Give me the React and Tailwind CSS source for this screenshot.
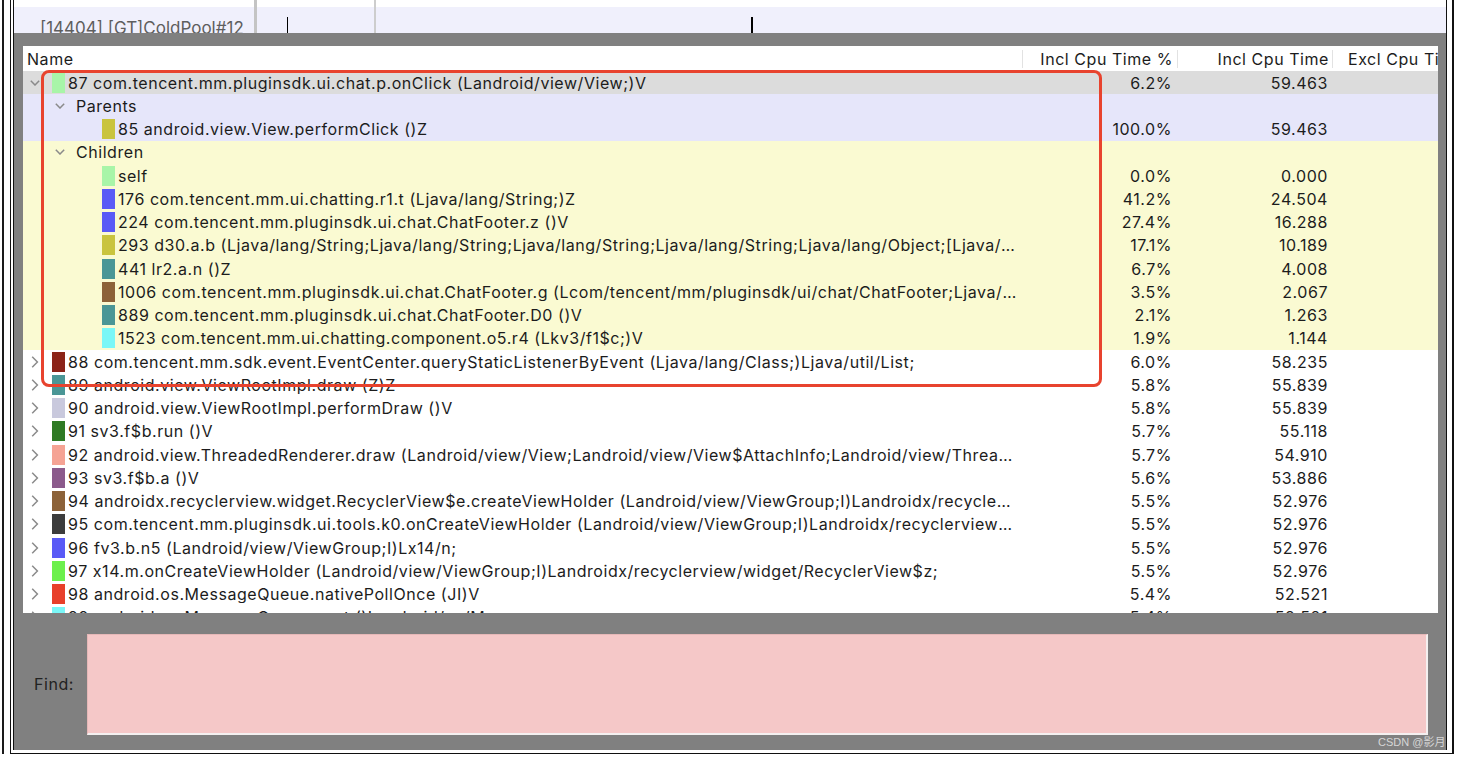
const LAV = "bg-[#e6e6fa]";
const YEL = "bg-[#fafad2]";

const rows = [
  { k: "top", open: true, c: "#a8f5a8", bg: "bg-[#dcdcdc]", t: "87 com.tencent.mm.pluginsdk.ui.chat.p.onClick (Landroid/view/View;)V", p: "6.2%", v: "59.463" },
  { k: "group", bg: LAV, t: "Parents" },
  { k: "child", c: "#c9c43e", bg: LAV, t: "85 android.view.View.performClick ()Z", p: "100.0%", v: "59.463" },
  { k: "group", bg: YEL, t: "Children" },
  { k: "child", c: "#a8f5a8", bg: YEL, t: "self", p: "0.0%", v: "0.000" },
  { k: "child", c: "#5a5af6", bg: YEL, t: "176 com.tencent.mm.ui.chatting.r1.t (Ljava/lang/String;)Z", p: "41.2%", v: "24.504" },
  { k: "child", c: "#5a5af6", bg: YEL, t: "224 com.tencent.mm.pluginsdk.ui.chat.ChatFooter.z ()V", p: "27.4%", v: "16.288" },
  { k: "child", c: "#c9c43e", bg: YEL, t: "293 d30.a.b (Ljava/lang/String;Ljava/lang/String;Ljava/lang/String;Ljava/lang/String;Ljava/lang/Object;[Ljava/lang/Object;)V", p: "17.1%", v: "10.189" },
  { k: "child", c: "#4a9696", bg: YEL, t: "441 lr2.a.n ()Z", p: "6.7%", v: "4.008" },
  { k: "child", c: "#8c6239", bg: YEL, t: "1006 com.tencent.mm.pluginsdk.ui.chat.ChatFooter.g (Lcom/tencent/mm/pluginsdk/ui/chat/ChatFooter;Ljava/lang/String;)V", p: "3.5%", v: "2.067" },
  { k: "child", c: "#4a9696", bg: YEL, t: "889 com.tencent.mm.pluginsdk.ui.chat.ChatFooter.D0 ()V", p: "2.1%", v: "1.263" },
  { k: "child", c: "#7af7f7", bg: YEL, t: "1523 com.tencent.mm.ui.chatting.component.o5.r4 (Lkv3/f1$c;)V", p: "1.9%", v: "1.144" },
  { k: "top", c: "#8b2318", t: "88 com.tencent.mm.sdk.event.EventCenter.queryStaticListenerByEvent (Ljava/lang/Class;)Ljava/util/List;", p: "6.0%", v: "58.235" },
  { k: "top", c: "#4a9696", t: "89 android.view.ViewRootImpl.draw (Z)Z", p: "5.8%", v: "55.839" },
  { k: "top", c: "#c9c9dd", t: "90 android.view.ViewRootImpl.performDraw ()V", p: "5.8%", v: "55.839" },
  { k: "top", c: "#2f7a24", t: "91 sv3.f$b.run ()V", p: "5.7%", v: "55.118" },
  { k: "top", c: "#f5a394", t: "92 android.view.ThreadedRenderer.draw (Landroid/view/View;Landroid/view/View$AttachInfo;Landroid/view/ThreadedRenderer$DrawCallbacks;)V", p: "5.7%", v: "54.910" },
  { k: "top", c: "#8b5a8b", t: "93 sv3.f$b.a ()V", p: "5.6%", v: "53.886" },
  { k: "top", c: "#8c6239", t: "94 androidx.recyclerview.widget.RecyclerView$e.createViewHolder (Landroid/view/ViewGroup;I)Landroidx/recyclerview/widget/RecyclerView$z;", p: "5.5%", v: "52.976" },
  { k: "top", c: "#3c3c3c", t: "95 com.tencent.mm.pluginsdk.ui.tools.k0.onCreateViewHolder (Landroid/view/ViewGroup;I)Landroidx/recyclerview/widget/RecyclerView$z;", p: "5.5%", v: "52.976" },
  { k: "top", c: "#5a5af6", t: "96 fv3.b.n5 (Landroid/view/ViewGroup;I)Lx14/n;", p: "5.5%", v: "52.976" },
  { k: "top", c: "#6cf04c", t: "97 x14.m.onCreateViewHolder (Landroid/view/ViewGroup;I)Landroidx/recyclerview/widget/RecyclerView$z;", p: "5.5%", v: "52.976" },
  { k: "top", c: "#e8402a", t: "98 android.os.MessageQueue.nativePollOnce (JI)V", p: "5.4%", v: "52.521" },
  { k: "top", c: "#7af7f7", t: "99 android.os.MessageQueue.next ()Landroid/os/Message;", p: "5.4%", v: "52.521" },
];

const Down = () => (
  <svg width="10" height="6" viewBox="0 0 10 6" className="shrink-0">
    <polyline points="0.8,0.8 5,5 9.2,0.8" fill="none" stroke="#8a8a8a" strokeWidth="1.5" />
  </svg>
);

const Right = () => (
  <svg width="10" height="12" viewBox="0 0 10 12" className="shrink-0">
    <polyline points="2.2,0.8 7.4,6 2.2,11.2" fill="none" stroke="#8a8a8a" strokeWidth="1.5" />
  </svg>
);

const Swatch = ({ c }) => (
  <span className="w-[13px] h-[20px] shrink-0" style={{ backgroundColor: c }} />
);

function NameCell({ r }) {
  if (r.k === "group") {
    return (
      <div className="flex items-center pl-[32px] min-w-0">
        <Down />
        <span className="ml-[11px]">{r.t}</span>
      </div>
    );
  }
  if (r.k === "child") {
    return (
      <div className="flex items-center pl-[79px] pr-[5px] min-w-0">
        <Swatch c={r.c} />
        <span className="ml-[3px] truncate">{r.t}</span>
      </div>
    );
  }
  return (
    <div className="flex items-center pl-[7px] pr-[5px] min-w-0">
      {r.open ? <Down /> : <Right />}
      <span className="ml-[12px]" />
      <Swatch c={r.c} />
      <span className="ml-[3px] truncate">{r.t}</span>
    </div>
  );
}

function Row({ r }) {
  return (
    <div className={`grid grid-cols-[999px_155px_155px_1fr] h-[23.25px] items-center ${r.bg || ""}`}>
      <NameCell r={r} />
      <div className="text-right pr-[5px]">{r.p}</div>
      <div className="text-right pr-[4px]">{r.v}</div>
      <div />
    </div>
  );
}

const HeadDivider = () => <span className="w-px h-[18px] bg-[#e2e2e2] shrink-0" />;

export default function App() {
  return (
    <div className="relative w-[1460px] h-[758px] bg-white overflow-hidden flex font-['Inter','Liberation_Sans',sans-serif] text-[16px] leading-[18px] tracking-[0.55px] text-[#1c1c1c]">
      <div className="w-[10px] h-[754px] shrink-0 pl-[2px]">
        <div className="h-full w-[2px] bg-[#1a1a1a]" />
      </div>

      <div className="w-[1444px] h-[754px] shrink-0 border-l border-r-2 border-b border-[#111] pl-[2px] pr-[5px] pb-[3px] flex">
        <div className="flex-1 border-x border-[#111] flex flex-col">
          {/* timeline strip */}
          <div className="h-[33px] flex shrink-0">
            <div className="w-[240px] flex flex-col">
              <div className="h-[7px] bg-white" />
              <div className="flex-1 bg-[#f0f0fc] overflow-hidden pl-[26px] pt-[11px] text-[#5e5e5e] text-[17px] leading-[20px] tracking-normal whitespace-nowrap">
                [14404] [GT]ColdPool#12
              </div>
            </div>
            <div className="w-[3px] bg-[#c4c4c4]" />
            <div className="w-[117px] flex flex-col">
              <div className="h-[7px] bg-white" />
              <div className="flex-1 bg-[#f0f0fc] flex items-end pl-[30px]">
                <span className="w-px h-[16px] bg-black" />
              </div>
            </div>
            <div className="w-[2px] bg-[#cdcdcd]" />
            <div className="flex-1 flex flex-col">
              <div className="h-[7px] bg-white" />
              <div className="flex-1 bg-[#f0f0fc] flex items-end pl-[375px]">
                <span className="w-[2px] h-[16px] bg-black" />
              </div>
            </div>
          </div>

          <div className="h-[13px] bg-[#808080] shrink-0" />

          {/* call tree table */}
          <div className="h-[567px] shrink-0 bg-[#808080] pl-[9px] flex">
            <div className="w-[1415px] h-full bg-white overflow-hidden">
              <div className="grid grid-cols-[999px_155px_155px_1fr] h-[25px] items-center whitespace-nowrap">
                <div className="flex items-center pl-[4px]">
                  <span>Name</span>
                </div>
                <div className="flex items-center justify-between">
                  <HeadDivider />
                  <span className="pr-[4px]">Incl Cpu Time %</span>
                </div>
                <div className="flex items-center justify-between">
                  <HeadDivider />
                  <span className="pr-[3px]">Incl Cpu Time</span>
                </div>
                <div className="flex items-center overflow-hidden">
                  <HeadDivider />
                  <span className="ml-[15px]">Excl Cpu Time</span>
                </div>
              </div>
              {rows.map((r, i) => (
                <Row key={i} r={r} />
              ))}
            </div>
          </div>

          {/* find bar */}
          <div className="flex-1 bg-[#808080] flex items-center pl-[20px] pr-[18px] pt-[5px]">
            <span className="w-[53px] shrink-0 text-[#222]">Find:</span>
            <div className="flex-1 h-[101px] bg-[#f5c8c8] border-t border-l border-[#e6b8b8] border-r-2 border-b-2 border-r-[#f4f0f0] border-b-[#f4f0f0]" />
          </div>
        </div>
      </div>

      {/* annotation */}
      <div className="absolute left-[41px] top-[70px] w-[1061px] h-[317px] border-[3px] border-[#e8432e] rounded-[8px]" />
      <div className="absolute left-[1378px] top-[736px] text-[11px] leading-[12px] tracking-normal text-[#d6d6d6] font-['Liberation_Sans','Noto_Sans_CJK_SC',sans-serif]">
        CSDN @影月
      </div>
    </div>
  );
}
